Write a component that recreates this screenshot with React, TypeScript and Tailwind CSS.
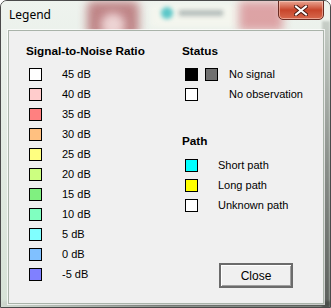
import React from "react";

const snr: [string, string][] = [
  ["#ffffff", "45 dB"],
  ["#ffcccc", "40 dB"],
  ["#ff8080", "35 dB"],
  ["#ffc080", "30 dB"],
  ["#ffff80", "25 dB"],
  ["#ccff80", "20 dB"],
  ["#80f080", "15 dB"],
  ["#80ffc0", "10 dB"],
  ["#80ffff", "5 dB"],
  ["#80c0ff", "0 dB"],
  ["#8080ff", "-5 dB"],
];

const Sw = ({ c }: { c: string }) => (
  <div className="w-[13px] h-[13px] border border-black shrink-0" style={{ backgroundColor: c }} />
);

export default function App() {
  return (
    <div className="w-[331px] h-[308px] relative overflow-hidden bg-[#dfe7df] rounded-t-[7px] border border-[#4a4a4a]" style={{ fontFamily: '"Liberation Sans", Arial, sans-serif' }}>
      {/* blurred glass background */}
      <div className="absolute inset-0 bg-gradient-to-b from-[#eef3ee] to-[#d6e2d6]" />
      <div className="absolute left-[86px] top-[0px] w-[52px] h-[36px] rounded-md bg-[#b46a6e] blur-[5px] opacity-80" />
      <div className="absolute left-[100px] top-[12px] w-[24px] h-[24px] rounded-full bg-[#f2dcdc] blur-[4px] opacity-90" />
      <div className="absolute left-[150px] top-[4px] w-[86px] h-[22px] bg-[#f4f6ee] blur-[3px]" />
      <div className="absolute left-[160px] top-[6px] w-[12px] h-[12px] rounded-full bg-[#5bc7c8] blur-[2px]" />
      <div className="absolute left-[178px] top-[9px] w-[44px] h-[6px] bg-[#9aa6a6] blur-[2px] opacity-70" />
      <div className="absolute left-[238px] top-[0px] w-[44px] h-[30px] bg-[#d98f93] blur-[5px] opacity-80" />
      <div className="absolute right-0 top-[20px] w-[8px] h-[290px] bg-gradient-to-b from-[#c8cfc8] via-[#8a8f8a] to-[#5a5e5a] blur-[1px]" />
      <div className="absolute left-0 bottom-0 w-full h-[6px] bg-gradient-to-r from-[#cfd8cf] via-[#6a6e6a] to-[#4a4e4a] blur-[1px]" />

      {/* title */}
      <div className="absolute left-[8px] top-[6px] text-[12px] leading-[16px] text-black" style={{ fontFamily: '"Noto Sans", "Open Sans", sans-serif' }}>Legend</div>

      {/* close button */}
      <div className="absolute left-[277px] top-[-1px] w-[46px] h-[20px] rounded-b-[5px] border border-[#6b2b22] bg-gradient-to-b from-[#e9a593] via-[#c8452b] to-[#d7684d] flex items-center justify-center shadow-[inset_0_0_0_1px_rgba(255,220,210,0.5)]">
        <svg width="14" height="11" viewBox="0 0 14 11">
          <path d="M2 1.5 L12 9.5 M12 1.5 L2 9.5" stroke="#4a1a12" strokeWidth="4" strokeLinecap="square" />
          <path d="M2 1.5 L12 9.5 M12 1.5 L2 9.5" stroke="#ffffff" strokeWidth="2" strokeLinecap="square" />
        </svg>
      </div>

      {/* client area */}
      <div className="absolute left-[7px] top-[29px] w-[316px] h-[274px] border border-[#a9b3a9] bg-[#f0f0f0] flex text-[11px] text-black shadow-[0_0_0_1px_rgba(255,255,255,0.7)]">
        <div className="w-[173px] pl-[17px] pt-[13px] flex flex-col">
          <div className="font-bold text-[11.75px] leading-[14px]">Signal-to-Noise Ratio</div>
          <div className="mt-[6px] flex flex-col">
            {snr.map(([c, t]) => (
              <div key={t} className="h-5 flex items-center">
                <div className="ml-[3px]"><Sw c={c} /></div>
                <span className="ml-[20px] leading-[13px]">{t}</span>
              </div>
            ))}
          </div>
        </div>
        <div className="flex-1 pt-[13px] pb-[15px] flex flex-col">
          <div className="font-bold text-[11.75px] leading-[14px]">Status</div>
          <div className="mt-[6px] flex flex-col">
            <div className="h-5 flex items-center">
              <div className="ml-[3px] flex gap-[7px]">
                <Sw c="#000000" />
                <Sw c="#707070" />
              </div>
              <span className="ml-[11px]">No signal</span>
            </div>
            <div className="h-5 flex items-center">
              <div className="ml-[3px]"><Sw c="#ffffff" /></div>
              <span className="ml-[31px]">No observation</span>
            </div>
          </div>
          <div className="mt-[30px] font-bold text-[11.75px] leading-[14px]">Path</div>
          <div className="mt-[7px] flex flex-col">
            {[["#00ffff", "Short path"], ["#ffff00", "Long path"], ["#ffffff", "Unknown path"]].map(([c, t]) => (
              <div key={t} className="h-5 flex items-center">
                <div className="ml-[3px]"><Sw c={c} /></div>
                <span className="ml-[20px]">{t}</span>
              </div>
            ))}
          </div>
          <button className="mt-auto ml-[37px] w-[74px] h-[25px] border-2 border-[#6b6b6b] bg-[#f0f0f0] shadow-[inset_1px_1px_0_#ffffff,inset_-1px_-1px_0_#a0a0a0] text-[12px] text-black flex items-center justify-center">
            Close
          </button>
        </div>
      </div>
    </div>
  );
}
